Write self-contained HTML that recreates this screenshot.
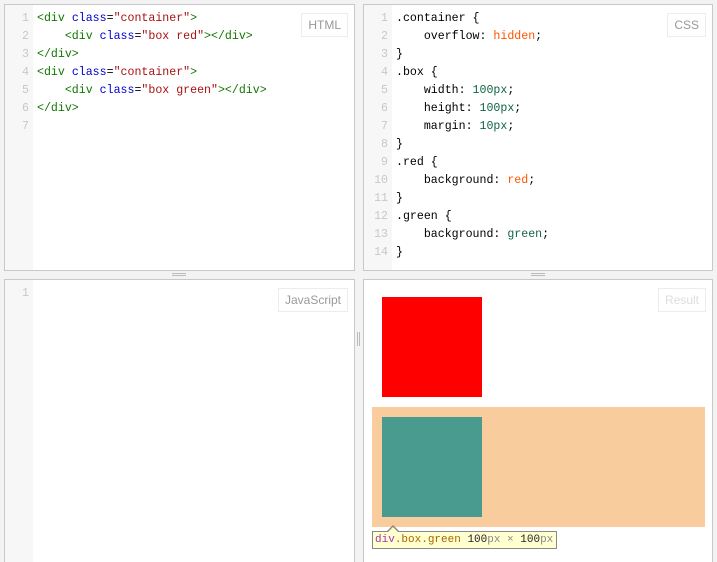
<!DOCTYPE html>
<html style="overflow:hidden;height:562px"><head><style>
body{margin:0;width:717px;height:562px;background:#f3f3f3;position:relative;overflow:hidden;font-family:"Liberation Sans",sans-serif}
.p{position:absolute;background:#fff;border:1px solid #c8c8c8;box-sizing:border-box;overflow:hidden}
.g{position:absolute;left:0;top:0;bottom:0;width:28px;background:#f7f7f7}
.code{position:absolute;left:0;top:5px;font-family:"Liberation Mono","DejaVu Sans Mono",monospace;font-size:11.6px;line-height:18px;white-space:pre}
.ln{display:inline-block;width:24px;text-align:right;color:#c8c8c8;margin-right:8px}
.lab{position:absolute;top:8px;right:6px;border:1px solid #ececec;color:#999;font-size:12px;padding:4px 6px}
.t{color:#170}.a{color:#00c}.s{color:#a11}.k{color:#000}.n{color:#164}.v{color:#f50}
.hr{position:absolute;width:14px;height:3px;border-top:1px solid #bbb;border-bottom:1px solid #bbb;box-sizing:border-box}
</style></head><body>
<div class="p" style="left:4px;top:4px;width:351px;height:267px"><div class="g"></div>
<div class="code"><span class="ln">1</span><span class="t">&lt;div</span> <span class="a">class</span>=<span class="s">"container"</span><span class="t">&gt;</span>
<span class="ln">2</span>    <span class="t">&lt;div</span> <span class="a">class</span>=<span class="s">"box red"</span><span class="t">&gt;&lt;/div&gt;</span>
<span class="ln">3</span><span class="t">&lt;/div&gt;</span>
<span class="ln">4</span><span class="t">&lt;div</span> <span class="a">class</span>=<span class="s">"container"</span><span class="t">&gt;</span>
<span class="ln">5</span>    <span class="t">&lt;div</span> <span class="a">class</span>=<span class="s">"box green"</span><span class="t">&gt;&lt;/div&gt;</span>
<span class="ln">6</span><span class="t">&lt;/div&gt;</span>
<span class="ln">7</span></div>
<div class="lab">HTML</div></div>
<div class="p" style="left:363px;top:4px;width:350px;height:267px"><div class="g"></div>
<div class="code"><span class="ln">1</span>.container {
<span class="ln">2</span>    overflow: <span class="v">hidden</span>;
<span class="ln">3</span>}
<span class="ln">4</span>.box {
<span class="ln">5</span>    width: <span class="n">100px</span>;
<span class="ln">6</span>    height: <span class="n">100px</span>;
<span class="ln">7</span>    margin: <span class="n">10px</span>;
<span class="ln">8</span>}
<span class="ln">9</span>.red {
<span class="ln">10</span>    background: <span class="v">red</span>;
<span class="ln">11</span>}
<span class="ln">12</span>.green {
<span class="ln">13</span>    background: <span class="n">green</span>;
<span class="ln">14</span>}</div>
<div class="lab">CSS</div></div>
<div class="hr" style="left:172px;top:273px"></div>
<div class="hr" style="left:531px;top:273px"></div>
<div style="position:absolute;left:357px;top:332px;width:3px;height:14px;border-left:1px solid #bbb;border-right:1px solid #bbb;box-sizing:border-box"></div>
<div class="p" style="left:4px;top:279px;width:351px;height:290px"><div class="g"></div>
<div class="code"><span class="ln">1</span></div>
<div class="lab">JavaScript</div></div>
<div class="p" style="left:363px;top:279px;width:350px;height:290px">
<div class="lab" style="color:#ddd">Result</div>
<div style="position:absolute;left:18px;top:17px;width:100px;height:100px;background:red"></div>
<div style="position:absolute;left:8px;top:127px;width:333px;height:120px;background:#f8cc9c"></div>
<div style="position:absolute;left:18px;top:137px;width:100px;height:100px;background:#499a8f"></div>
<div style="position:absolute;left:8px;top:251px;height:18px;border:1px solid #888;background:#ffffd0;font-family:'Liberation Mono',monospace;font-size:11px;line-height:16px;padding:0 2px;white-space:pre;box-sizing:border-box;width:185px;overflow:hidden"><span style="color:#a3a">div</span><span style="color:#a60">.box.green</span> <span style="color:#222">100</span><span style="color:#888">px × </span><span style="color:#222">100</span><span style="color:#888">px</span></div>
<div style="position:absolute;left:23px;top:245px;width:0;height:0;border-left:6px solid transparent;border-right:6px solid transparent;border-bottom:6px solid #888"></div>
<div style="position:absolute;left:24px;top:247px;width:0;height:0;border-left:5px solid transparent;border-right:5px solid transparent;border-bottom:5px solid #ffffd0"></div>
</div>
</body></html>
